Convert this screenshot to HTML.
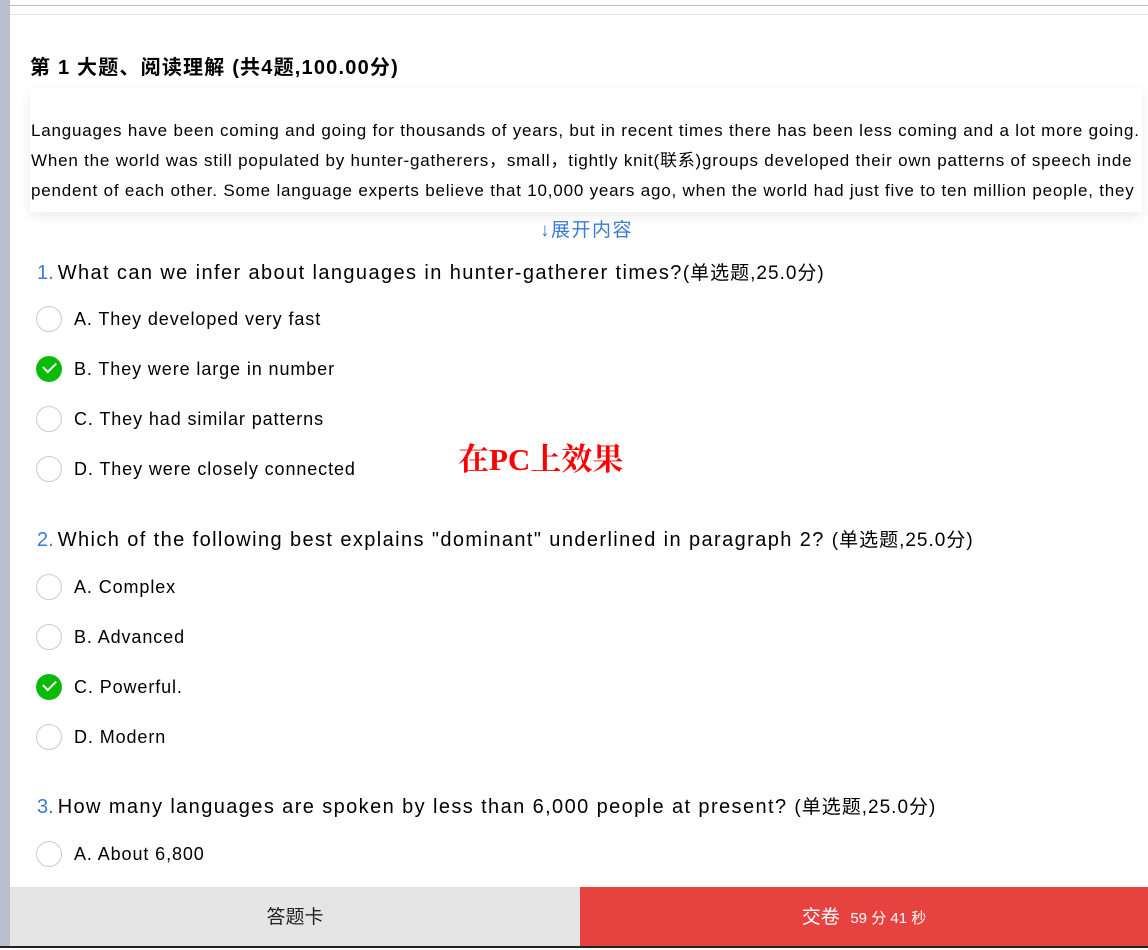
<!DOCTYPE html>
<html><head><meta charset="utf-8"><style>
*{margin:0;padding:0;box-sizing:border-box}
body{width:1148px;height:948px;position:relative;background:#fff;overflow:hidden;font-family:"Liberation Sans","Noto Sans CJK SC",sans-serif;color:#000}
.abs{position:absolute;white-space:nowrap}
.bar{position:absolute;left:0;top:0;width:10px;height:948px;background:#b9bfcc}
.q{font-size:20px;line-height:24px;letter-spacing:1.4px}
.q b{color:#3a7bd5;font-weight:normal;margin-right:4px;letter-spacing:0}
.q span{font-size:19px;letter-spacing:1px}
.opt{font-size:18px;line-height:22px;letter-spacing:0.9px}
.c{position:absolute;left:36px;width:26px;height:26px;border-radius:50%;border:1.5px solid #ccc;background:#fff}
.ck{border:none;background:#09bb07}
.ck:after{content:"";position:absolute;left:7px;top:6px;width:11px;height:6px;border-left:2px solid #fff;border-bottom:2px solid #fff;transform:rotate(-45deg)}
</style></head><body>
<div class="bar"></div>
<div class="abs" style="left:0;top:5px;width:1148px;height:1px;background:#bbb"></div>
<div class="abs" style="left:10px;top:14px;width:1138px;height:1px;background:#e4e4e4"></div>
<div class="abs" style="left:30px;top:56px;font-size:20px;font-weight:bold;line-height:24px;letter-spacing:1.2px">第 1 大题、阅读理解 (共4题,100.00分)</div>
<div class="abs" style="left:30px;top:88px;width:1112px;height:124px;background:#fff;box-shadow:0 4px 12px rgba(0,0,0,0.08);padding:28px 0 0 1px;font-size:17px;letter-spacing:0.8px;line-height:30px;overflow:hidden;white-space:nowrap">
Languages have been coming and going for thousands of years, but in recent times there has been less coming and a lot more going.<br>When the world was still populated by hunter-gatherers，small，tightly knit(联系)groups developed their own patterns of speech inde<br>pendent of each other. Some language experts believe that 10,000 years ago, when the world had just five to ten million people, they</div>
<div class="abs" style="left:540px;top:220px;font-size:19px;letter-spacing:1.5px;color:#3a7bd5;line-height:22px">↓展开内容</div>

<div class="abs q" style="left:37px;top:261px"><b>1.</b>What can we infer about languages in hunter-gatherer times?<span>(单选题,25.0分)</span></div>
<div class="c" style="top:306px"></div><div class="abs opt" style="left:74px;top:308px">A. They developed very fast</div>
<div class="c ck" style="top:356px"></div><div class="abs opt" style="left:74px;top:358px">B. They were large in number</div>
<div class="c" style="top:406px"></div><div class="abs opt" style="left:74px;top:408px">C. They had similar patterns</div>
<div class="c" style="top:456px"></div><div class="abs opt" style="left:74px;top:458px">D. They were closely connected</div>
<div class="abs" style="left:458px;top:443px;font-family:'Liberation Serif','Noto Serif CJK SC',serif;font-weight:bold;font-size:31px;color:#f00;line-height:34px">在PC上效果</div>

<div class="abs q" style="left:37px;top:528px"><b>2.</b>Which of the following best explains "dominant" underlined in paragraph 2?&nbsp;<span>(单选题,25.0分)</span></div>
<div class="c" style="top:574px"></div><div class="abs opt" style="left:74px;top:576px">A. Complex</div>
<div class="c" style="top:624px"></div><div class="abs opt" style="left:74px;top:626px">B. Advanced</div>
<div class="c ck" style="top:674px"></div><div class="abs opt" style="left:74px;top:676px">C. Powerful.</div>
<div class="c" style="top:724px"></div><div class="abs opt" style="left:74px;top:726px">D. Modern</div>

<div class="abs q" style="left:37px;top:795px"><b>3.</b>How many languages are spoken by less than 6,000 people at present?&nbsp;<span>(单选题,25.0分)</span></div>
<div class="c" style="top:841px"></div><div class="abs opt" style="left:74px;top:843px">A. About 6,800</div>

<div class="abs" style="left:10px;top:887px;width:570px;height:59px;background:#e5e5e5;text-align:center;line-height:62px;font-size:19px;color:#222">答题卡</div>
<div class="abs" style="left:580px;top:887px;width:568px;height:59px;background:#e64340;text-align:center;line-height:62px;font-size:19px;color:#fff">交卷 &nbsp;<span style="font-size:15px">59 分 41 秒</span></div>
<div class="abs" style="left:0;top:946px;width:1148px;height:2px;background:#222"></div>
</body></html>
